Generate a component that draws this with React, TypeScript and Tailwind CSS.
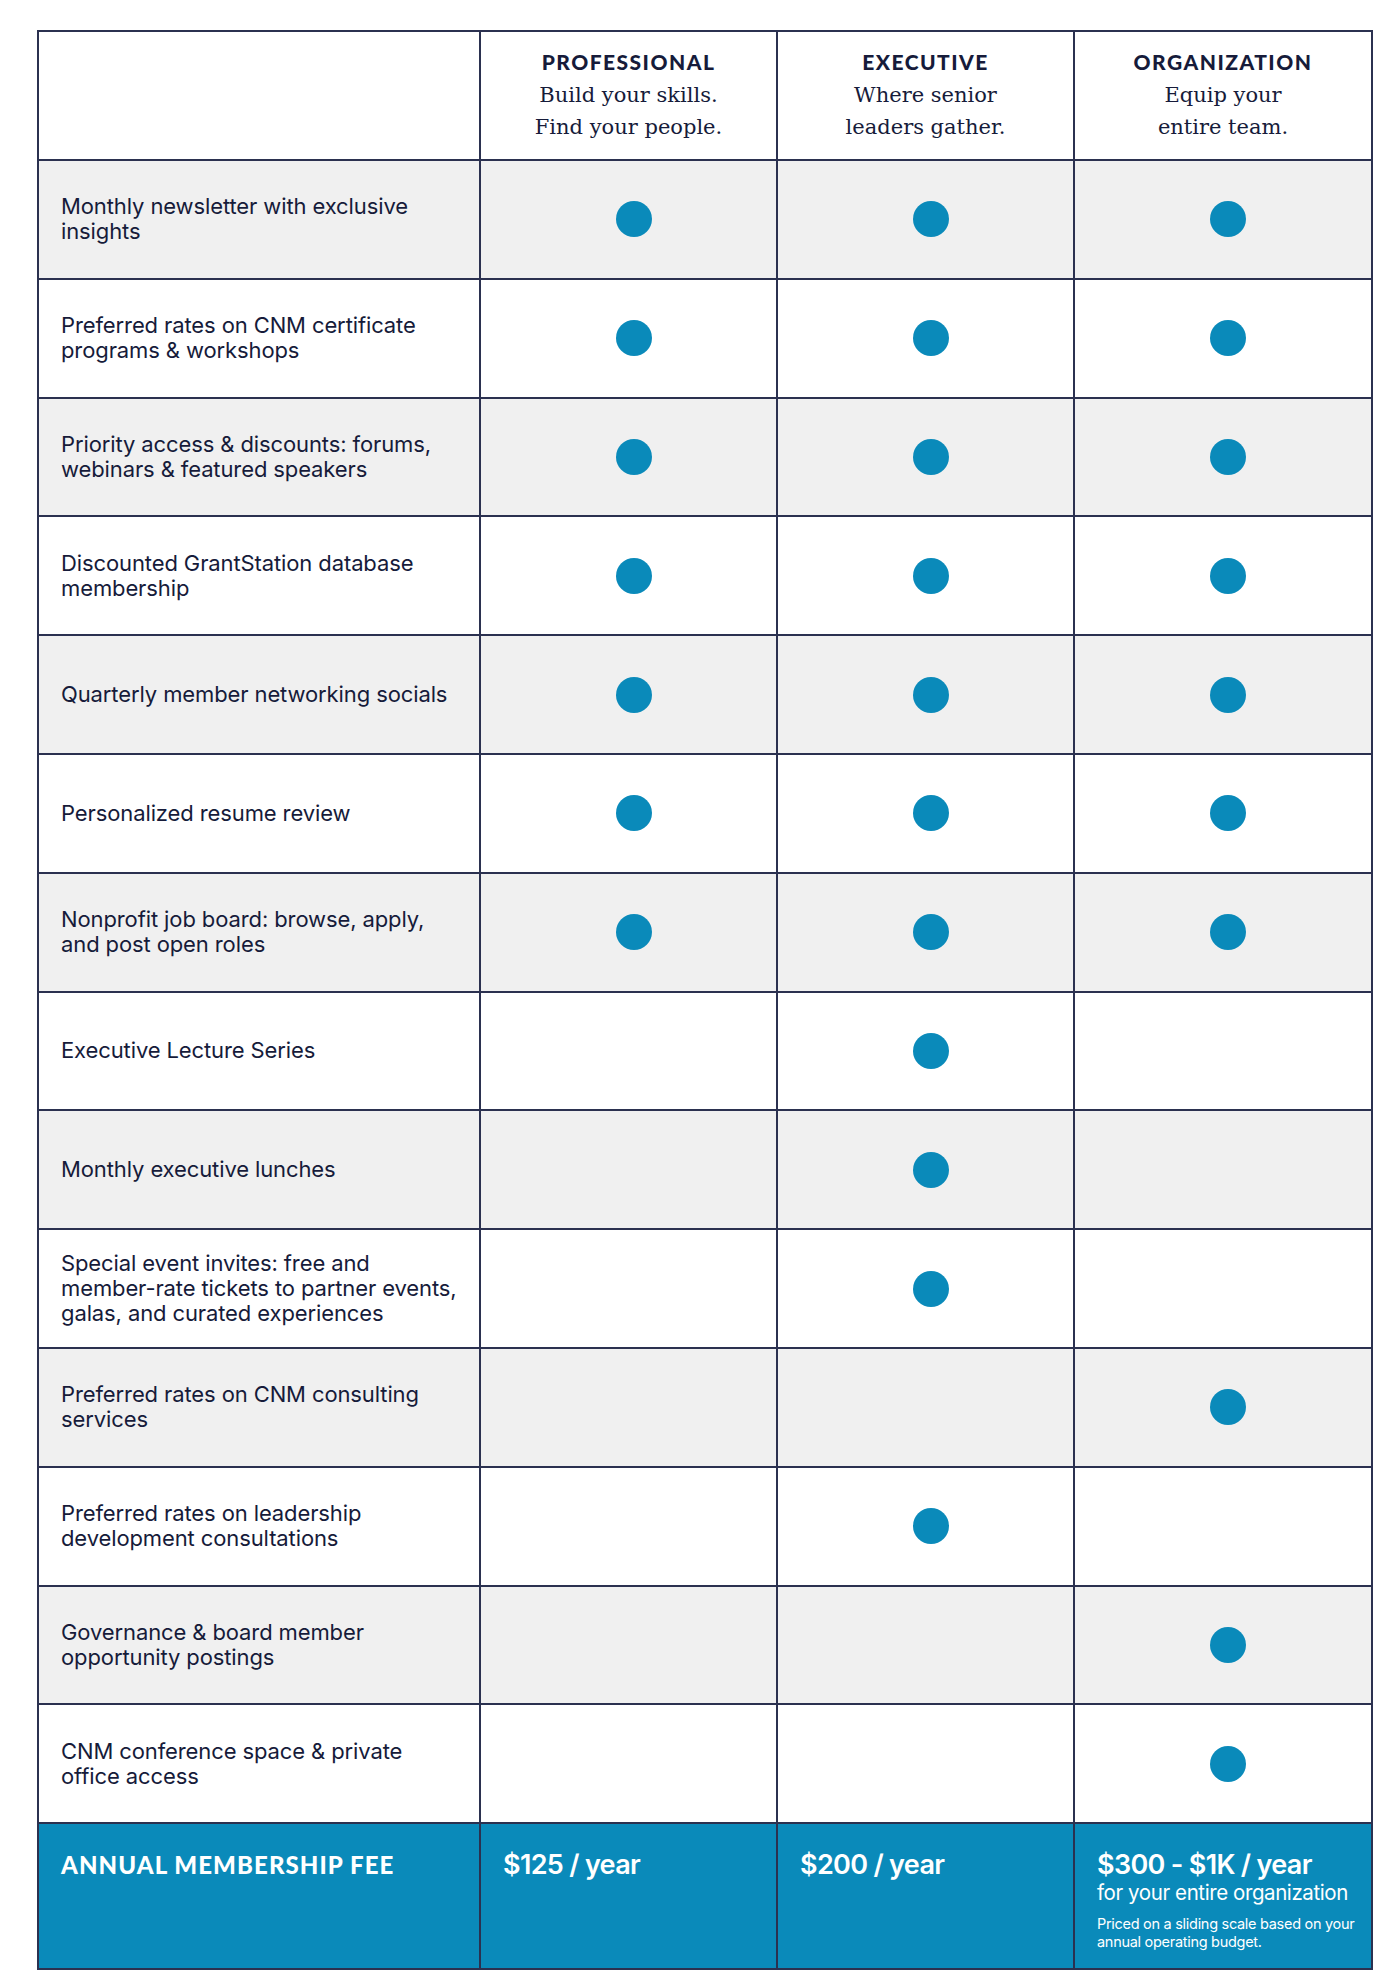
const sans = { fontFamily: "Inter, 'Noto Sans', sans-serif" };
const display = { fontFamily: "Lato, sans-serif" };

type Row = { lines: string[]; p?: boolean; e?: boolean; o?: boolean };

const rows: Row[] = [
  { lines: ["Monthly newsletter with exclusive", "insights"], p: true, e: true, o: true },
  { lines: ["Preferred rates on CNM certificate", "programs & workshops"], p: true, e: true, o: true },
  { lines: ["Priority access & discounts: forums,", "webinars & featured speakers"], p: true, e: true, o: true },
  { lines: ["Discounted GrantStation database", "membership"], p: true, e: true, o: true },
  { lines: ["Quarterly member networking socials"], p: true, e: true, o: true },
  { lines: ["Personalized resume review"], p: true, e: true, o: true },
  { lines: ["Nonprofit job board: browse, apply,", "and post open roles"], p: true, e: true, o: true },
  { lines: ["Executive Lecture Series"], e: true },
  { lines: ["Monthly executive lunches"], e: true },
  {
    lines: ["Special event invites: free and", "member-rate tickets to partner events,", "galas, and curated experiences"],
    e: true,
  },
  { lines: ["Preferred rates on CNM consulting", "services"], o: true },
  { lines: ["Preferred rates on leadership", "development consultations"], e: true },
  { lines: ["Governance & board member", "opportunity postings"], o: true },
  { lines: ["CNM conference space & private", "office access"], o: true },
];

const tiers = [
  { name: "PROFESSIONAL", sub: ["Build your skills.", "Find your people."] },
  { name: "EXECUTIVE", sub: ["Where senior", "leaders gather."] },
  { name: "ORGANIZATION", sub: ["Equip your", "entire team."] },
];

function Dot({ on }: { on?: boolean }) {
  return (
    <td className="border-2 border-[#2b3150] align-middle">
      {on && <div className="ml-[calc(50%-13px)] h-9 w-9 rounded-full bg-[#0a8aba]" />}
    </td>
  );
}

export default function App() {
  return (
    <div className="min-h-[1986px] bg-white pl-[37px] pt-[30px] text-[#161b3a]">
      <table className="table-fixed border-collapse" style={{ width: 1334 }}>
        <colgroup>
          <col className="w-[442px]" />
          <col className="w-[297px]" />
          <col className="w-[297px]" />
          <col className="w-[298px]" />
        </colgroup>
        <thead>
          <tr className="h-[129px]">
            <th className="border-2 border-[#2b3150] bg-white" />
            {tiers.map((t) => (
              <th key={t.name} className="border-2 border-[#2b3150] bg-white pt-[17px] text-center align-top">
                <div className="text-[21px] font-black leading-[26px] tracking-[0.07em]" style={display}>
                  {t.name}
                </div>
                <div className="mt-[4px] text-[21px] font-normal leading-[32px]" style={{ fontFamily: "'DejaVu Serif', serif" }}>
                  {t.sub.map((s) => (
                    <div key={s}>{s}</div>
                  ))}
                </div>
              </th>
            ))}
          </tr>
        </thead>
        <tbody>
          {rows.map((r, i) => (
            <tr key={i} className={`h-[118.8px] ${i % 2 === 0 ? "bg-[#f0f0f0]" : "bg-white"}`}>
              <td className="border-2 border-[#2b3150] pl-[22px] align-middle">
                <div className="text-[22px] leading-[25px] tracking-[-0.005em]" style={sans}>
                  {r.lines.map((l) => (
                    <div key={l}>{l}</div>
                  ))}
                </div>
              </td>
              <Dot on={r.p} />
              <Dot on={r.e} />
              <Dot on={r.o} />
            </tr>
          ))}
          <tr className="h-[146px] bg-[#0a8aba] text-white">
            <td className="border-2 border-[#2b3150] pl-[22px] pt-[27px] align-top">
              <div className="text-[24px] font-black leading-[28px] tracking-[0.045em]" style={display}>
                ANNUAL MEMBERSHIP FEE
              </div>
            </td>
            <td className="border-2 border-[#2b3150] pl-[22px] pt-[24px] align-top">
              <div className="text-[27px] font-semibold leading-[33px] tracking-[-0.025em]" style={sans}>
                $125 / year
              </div>
            </td>
            <td className="border-2 border-[#2b3150] pl-[22px] pt-[24px] align-top">
              <div className="text-[27px] font-semibold leading-[33px] tracking-[-0.025em]" style={sans}>
                $200 / year
              </div>
            </td>
            <td className="border-2 border-[#2b3150] pl-[22px] pt-[24px] align-top">
              <div className="text-[27px] font-semibold leading-[33px] tracking-[-0.025em]" style={sans}>
                $300 - $1K / year
              </div>
              <div className="text-[20.5px] leading-[24px] tracking-[-0.02em]" style={sans}>
                for your entire organization
              </div>
              <div className="mt-[10px] text-[14.5px] leading-[18px] tracking-[-0.02em]" style={sans}>
                Priced on a sliding scale based on your
                <br />
                annual operating budget.
              </div>
            </td>
          </tr>
        </tbody>
      </table>
    </div>
  );
}
